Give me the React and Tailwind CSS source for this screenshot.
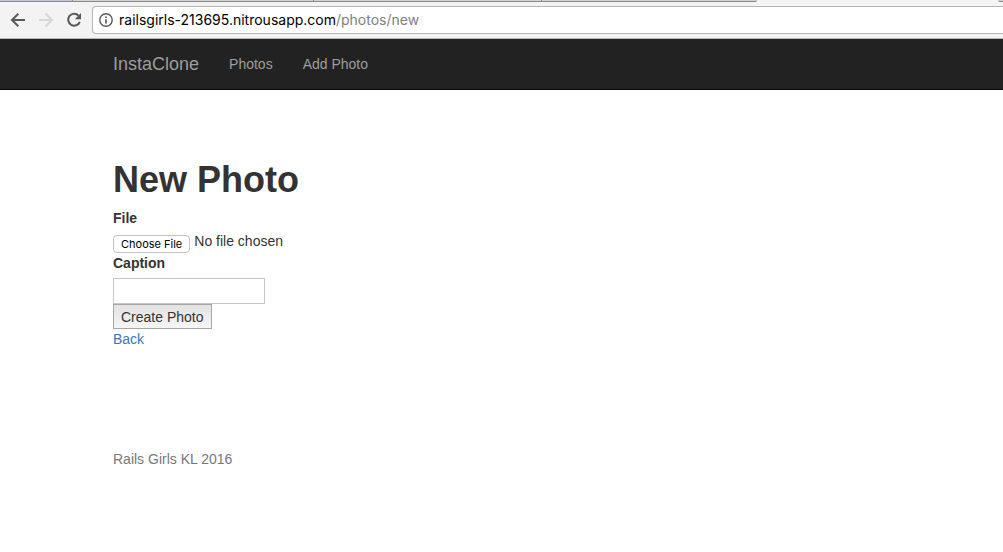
import React from "react";

function BrowserBar() {
  return (
    <header className="bg-[#f3f3f3]">
      <div className="flex h-[2px] justify-between">
        <div className="flex w-[757px] rounded-br-sm border-b border-[#8a8a8c] bg-[#d4d4d6]">
          <span className="w-[73px] border-r border-[#8a8a8c] bg-[#c0c8e0]" />
          <span className="w-[241px] border-r border-[#8a8a8c]" />
          <span className="w-[228px] border-r border-[#8a8a8c]" />
        </div>
        <span className="w-[5px] rounded-bl-sm border-b border-[#8a8a8c] bg-[#d4d4d6]" />
      </div>
      <div className="flex items-center border-b border-[#b5b5b5] pt-1 pb-1">
        <div className="flex w-[92px] items-center gap-3 pl-[10px]">
          <button type="button" aria-label="Back" className="text-[#5a5a5a]">
            <svg width="16" height="16" viewBox="0 0 16 16" fill="none" stroke="currentColor" strokeWidth="2">
              <path d="M15 8H2.5M8.3 1.7L2 8l6.3 6.3" />
            </svg>
          </button>
          <button type="button" aria-label="Forward" disabled className="text-[#d8d8d8]">
            <svg width="16" height="16" viewBox="0 0 16 16" fill="none" stroke="currentColor" strokeWidth="2">
              <path d="M1 8h12.5M7.7 1.7L14 8l-6.3 6.3" />
            </svg>
          </button>
          <button type="button" aria-label="Reload" className="text-[#5a5a5a]">
            <svg width="16" height="16" viewBox="0 0 16 16" fill="none">
              <path d="M12.6 3.6A6 6 0 1 0 13.8 9.8" stroke="currentColor" strokeWidth="2" />
              <path d="M15 1v6.2H8.8z" fill="currentColor" />
            </svg>
          </button>
        </div>
        <div className="flex h-7 flex-1 items-center gap-[6px] rounded-l border border-r-0 border-[#b5b5b5] bg-white pl-[6px] font-['Inter',sans-serif] text-[14px] leading-5">
          <svg width="14" height="14" viewBox="0 0 14 14" fill="none" className="text-[#5a5a5a]">
            <circle cx="7" cy="7" r="6.2" stroke="currentColor" strokeWidth="1.4" />
            <path d="M7 6.2v4.3M7 3.4v1.6" stroke="currentColor" strokeWidth="1.7" />
          </svg>
          <span className="text-black">
            railsgirls-213695.nitrousapp.com<span className="text-[#808080]">/photos/new</span>
          </span>
        </div>
      </div>
    </header>
  );
}

export default function App() {
  return (
    <div className="min-h-screen bg-white font-['Liberation_Sans',Arial,sans-serif] text-[14px] leading-5 text-[#333]">
      <BrowserBar />
      <nav className="border-b border-[#080808] bg-[#222]">
        <div className="flex h-[50px] items-center gap-[30px] px-[113px] text-[#9d9d9d]">
          <a href="#home" className="text-[18px]">InstaClone</a>
          <a href="#photos">Photos</a>
          <a href="#new">Add Photo</a>
        </div>
      </nav>
      <main className="px-[113px] pt-[70px]">
        <h1 className="text-[36px] leading-10 font-bold">New Photo</h1>
        <form className="mt-2 flex flex-col items-start">
          <label htmlFor="file" className="font-bold">File</label>
          <input
            id="file"
            type="file"
            className="mt-1 block h-[21px] leading-[18px] file:mt-[3px] file:mr-1 file:h-[18px] file:rounded file:border file:border-solid file:border-[#c2c2c2] file:bg-white file:px-[7px] file:align-top file:font-['Inter',sans-serif] file:text-[11px] file:leading-4 file:text-black"
          />
          <label htmlFor="caption" className="font-bold">Caption</label>
          <input id="caption" type="text" className="mt-[5px] h-[26px] w-[152px] border border-[#c6c6c6] bg-white px-1" />
          <button type="button" className="h-[25px] border border-[#a6a6a6] bg-linear-to-b from-[#e2e2e2] to-[#f6f6f6] px-[7px]">
            Create Photo
          </button>
        </form>
        <a href="#photos" className="text-[#337ab7]">Back</a>
      </main>
      <footer className="px-[113px] pt-[100px] text-[#777]">Rails Girls KL 2016</footer>
    </div>
  );
}
